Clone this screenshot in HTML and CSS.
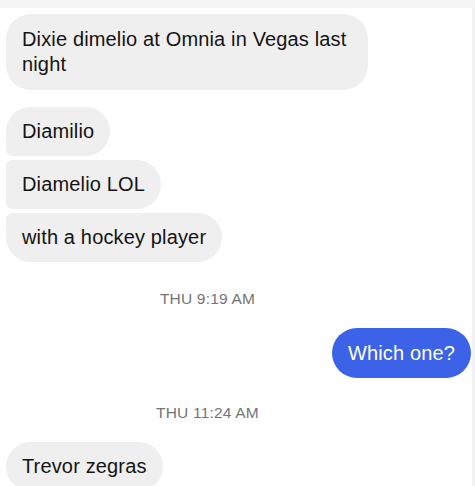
FILE: index.html
```html
<!DOCTYPE html>
<html lang="en">
<head>
<meta charset="utf-8">
<title>Messages</title>
<link rel="stylesheet" href="styles.css">
</head>
<body>
<div class="topband"></div>
<div class="screen">
  <main class="thread">
    <div class="msg in solo first">Dixie dimelio at Omnia in Vegas last night</div>
    <div class="group">
      <div class="msg in top">Diamilio</div>
      <div class="msg in mid">Diamelio LOL</div>
      <div class="msg in bottom">with a hockey player</div>
    </div>
    <div class="stamp stamp-1">THU 9:19 AM</div>
    <div class="msg out">Which one?</div>
    <div class="stamp stamp-2">THU 11:24 AM</div>
    <div class="msg in solo last">Trevor zegras</div>
  </main>
  <div class="edge"></div>
</div>
</body>
</html>
```

FILE: styles.css
```css
html, body {
  margin: 0;
  padding: 0;
  background: #ffffff;
  height: 100%;
  overflow: hidden;
}
body {
  font-family: "Liberation Sans", Arial, sans-serif;
  color: #141414;
}
.topband {
  height: 8px;
  background: #f5f5f5;
}
.screen {
  display: flex;
}
.thread {
  flex: 1;
  display: flex;
  flex-direction: column;
  align-items: flex-start;
  padding: 6px 1px 0 6px;
}
.edge {
  width: 3px;
  background: #f2f2f2;
}
.msg {
  box-sizing: border-box;
  font-size: 20px;
  letter-spacing: 0.15px;
  line-height: 25px;
  padding: 12px 16px;
  border-radius: 25px;
  max-width: 362px;
}
.in {
  background: #efefef;
  color: #141414;
}
.first {
  padding: 13px 16px;
}
.group {
  display: flex;
  flex-direction: column;
  align-items: flex-start;
  gap: 4px;
  margin-top: 17px;
}
.top {
  border-bottom-left-radius: 6px;
}
.mid {
  border-top-left-radius: 6px;
  border-bottom-left-radius: 6px;
}
.bottom {
  border-top-left-radius: 6px;
}
.stamp {
  align-self: stretch;
  text-align: center;
  padding-right: 62px;
  font-size: 15.5px;
  letter-spacing: 0.2px;
  line-height: 20px;
  color: #747474;
}
.stamp-1 {
  margin-top: 27px;
}
.stamp-2 {
  margin-top: 25px;
}
.out {
  align-self: flex-end;
  background: #3b62e7;
  color: #ffffff;
  padding: 12.5px 16px;
  margin-top: 19px;
}
.last {
  margin-top: 19px;
}
```
